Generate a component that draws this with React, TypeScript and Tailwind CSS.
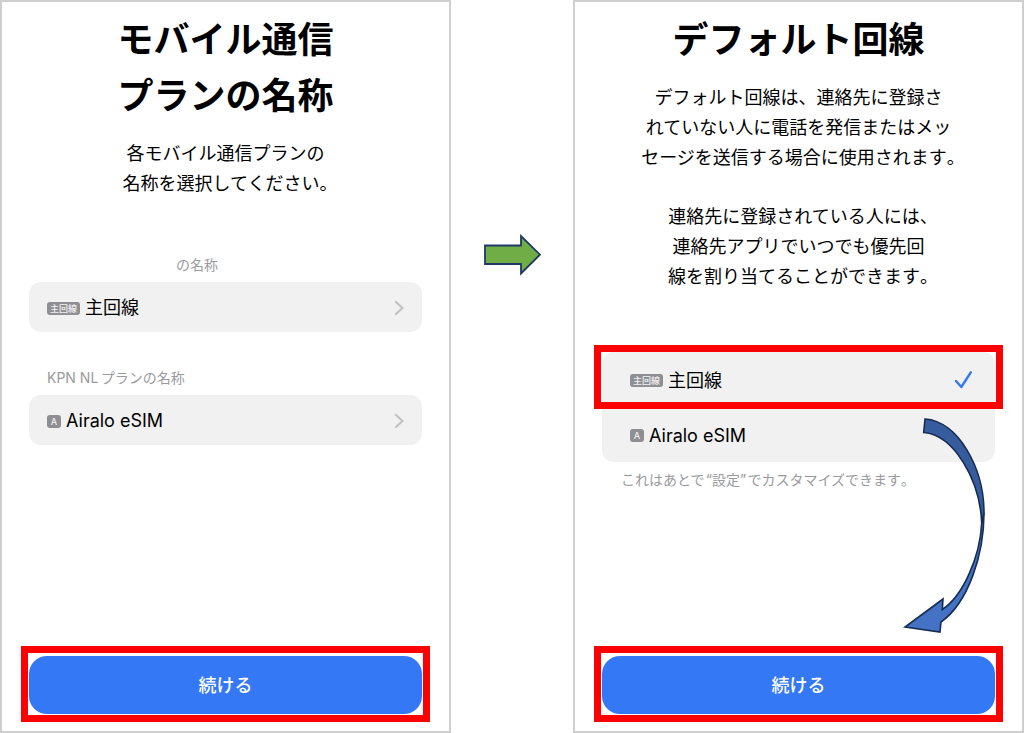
import type { ReactNode } from "react";

function Panel({ title, children }: { title: ReactNode; children: ReactNode }) {
  return (
    <section className="relative flex min-w-0 flex-1 flex-col border-2 border-[#cfcfcf] bg-white px-[27px] pt-[10px] pb-[9px]">
      <h1 className="text-center text-[36px] leading-[56px] font-bold text-black">{title}</h1>
      {children}
      <div className="-mx-2 mt-auto border-[7px] border-[#ff0000] px-px pt-[3px] pb-px">
        <button
          type="button"
          className="block h-[58px] w-full rounded-[18px] bg-[#3478f6] pt-[2px] text-[18px] leading-[30px] font-medium text-white"
        >
          続ける
        </button>
      </div>
    </section>
  );
}

/* Line-final punctuation takes half an em, so centred lines balance. */
function End({ children }: { children: string }) {
  return <span className="[font-feature-settings:'halt']">{children}</span>;
}

function Badge({ children }: { children: string }) {
  return (
    <span className="mr-[5px] flex h-[13px] min-w-[14px] items-center justify-center rounded-[3px] bg-[#8e8e93] px-[3px] text-[9px] leading-[13px] font-medium text-[#f2f2f2]">
      {children}
    </span>
  );
}

function Chevron() {
  return (
    <svg className="ml-auto" width="10" height="16" viewBox="0 0 10 16" fill="none" aria-hidden="true">
      <path d="M2 2L8.5 8L2 14" stroke="#c2c2c4" strokeWidth="2.2" strokeLinecap="round" strokeLinejoin="round" />
    </svg>
  );
}

function PlanRow({ badge, name }: { badge: string; name: string }) {
  return (
    <button
      type="button"
      className="mt-[7px] flex h-[50px] w-full items-center rounded-xl bg-[#f1f1f1] px-[18px] pt-[2px] text-[18px] leading-[30px] text-black"
    >
      <Badge>{badge}</Badge>
      {name}
      <Chevron />
    </button>
  );
}

export default function App() {
  return (
    <main
      lang="ja"
      className="flex min-h-screen bg-white font-['Inter','Noto_Sans_CJK_JP',sans-serif] text-black"
    >
      <Panel
        title={
          <>
            モバイル通信
            <br />
            プランの名称
          </>
        }
      >
        <p className="mt-[15px] text-center text-[18px] leading-[30px]">
          各モバイル通信プランの
          <br />
          名称を選択してください<End>。</End>
        </p>
        <h2 className="mt-14 pl-[147px] text-[14px] leading-5 text-[#9a9a9e]">の名称</h2>
        <PlanRow badge="主回線" name="主回線" />
        <h2 className="mt-9 pl-[18px] text-[14px] leading-5 text-[#9a9a9e]">{"KPN NL\u2009プランの名称"}</h2>
        <PlanRow badge="A" name="Airalo eSIM" />
      </Panel>

      <div className="flex w-[122px] shrink-0 items-start justify-center pt-[234px]">
        <svg width="58" height="42" viewBox="0 0 58 42" aria-hidden="true">
          <path
            d="M2 11.5H38V2L57 20.7L38 39.5V30H2Z"
            fill="#70ad47"
            stroke="#1f3864"
            strokeWidth="1.8"
          />
        </svg>
      </div>

      <Panel title="デフォルト回線">
        <p className="mt-[15px] text-center text-[18px] leading-[30px]">
          デフォルト回線は、連絡先に登録さ
          <br />
          れていない人に電話を発信またはメッ
          <br />
          セージを送信する場合に使用されます<End>。</End>
        </p>
        <p className="mt-[29px] text-center text-[18px] leading-[30px]">
          連絡先に登録されている人には<End>、</End>
          <br />
          連絡先アプリでいつでも優先回
          <br />
          線を割り当てることができます<End>。</End>
        </p>
        <div className="mt-[60px] rounded-xl bg-[#f1f1f1]">
          <button
            type="button"
            aria-pressed="true"
            className="relative flex h-[55px] w-full items-center px-7 pt-[2px] text-[18px] leading-[30px]"
          >
            <Badge>主回線</Badge>
            主回線
            <svg className="-mr-2 ml-auto" width="22" height="22" viewBox="0 0 22 22" fill="none" aria-hidden="true">
              <path
                d="M3 11L8.3 17L17.8 2.3"
                stroke="#3478f6"
                strokeWidth="2.4"
                strokeLinecap="round"
                strokeLinejoin="round"
              />
            </svg>
            <span className="absolute -inset-x-2 -top-[7px] -bottom-[2px] border-[7px] border-[#ff0000]" />
          </button>
          <button
            type="button"
            aria-pressed="false"
            className="flex h-[55px] w-full items-center px-7 pt-[2px] text-[18px] leading-[30px]"
          >
            <Badge>A</Badge>
            Airalo eSIM
          </button>
        </div>
        <p className="mt-2 pl-[19px] text-[14px] leading-5 text-[#9a9a9e]">
          {"これはあとで\u200a“設定”\u200aでカスタマイズできます"}
          <End>。</End>
        </p>
        <svg
          className="pointer-events-none absolute top-[413px] right-8"
          width="90"
          height="220"
          viewBox="0 0 90 220"
          aria-hidden="true"
        >
          <g stroke="#172c51" strokeWidth="1.6" strokeLinejoin="miter">
            <path
              d="M84 98C84 140 68 188 41 207L40 217L5 212L43 184L42.3 194.5C63 181 80 142 81.7 108Z"
              fill="#4472c4"
            />
            <path d="M25 4C58 6 84 53 84 98L81.7 108C80 65 54 20 23.7 17.5Z" fill="#365c9d" />
          </g>
        </svg>
      </Panel>
    </main>
  );
}
